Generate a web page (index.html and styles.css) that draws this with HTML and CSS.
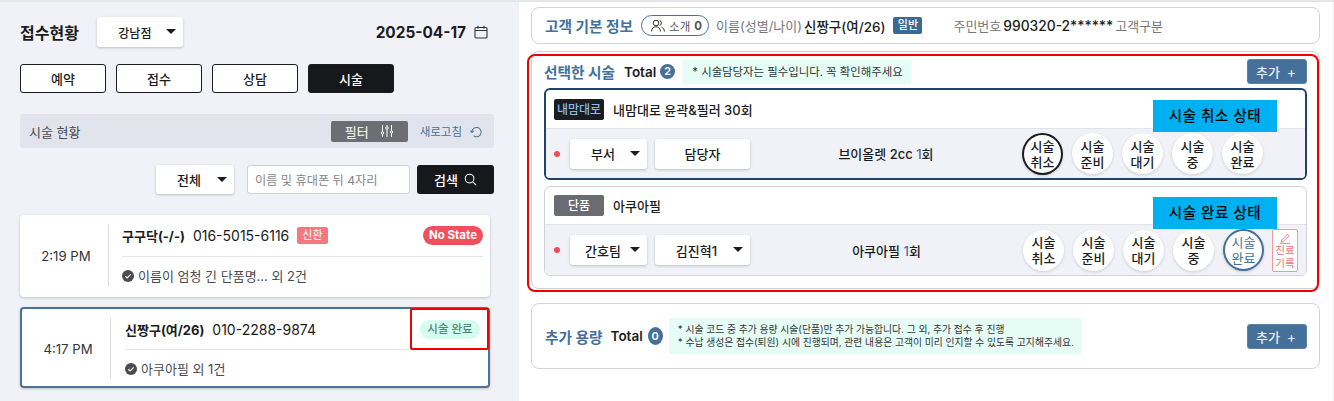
FILE: index.html
```html
<!DOCTYPE html>
<html lang="ko">
<head>
    <meta charset="UTF-8">
    <title>접수현황</title>
    <link rel="stylesheet" href="styles.css">
</head>
<body>
<div class="topline"></div>
<div class="page">

    <!-- 왼쪽 접수 현황 -->
    <div class="left">
        <div class="head-row">
            <h1>접수현황</h1>
            <div class="select branch">강남점<span class="caret"></span></div>
            <div class="date">2025-04-17
                <svg class="cal" viewBox="0 0 14 14" width="14" height="14" fill="none" stroke="#333" stroke-width="1.1"><rect x="1" y="2.5" width="12" height="10.5" rx="1"/><path d="M1 5.5h12M4 .8v3M10 .8v3"/></svg>
            </div>
        </div>

        <div class="tabs">
            <button class="tab">예약</button>
            <button class="tab">접수</button>
            <button class="tab">상담</button>
            <button class="tab on">시술</button>
        </div>

        <div class="status-bar">
            <span class="status-title">시술 현황</span>
            <span class="filter">필터
                <svg viewBox="0 0 14 14" width="14" height="14" fill="none" stroke="#fff" stroke-width="1"><path d="M2.5 1v12M7 1v12M11.500 1v12"/><circle cx="2.500" cy="9" r="1.200" fill="#6d6e73"/><circle cx="7" cy="4" r="1.200" fill="#6d6e73"/><circle cx="11.500" cy="8" r="1.200" fill="#6d6e73"/></svg>
            </span>
            <span class="refresh">새로고침
                <svg viewBox="0 0 14 14" width="13" height="13" fill="none" stroke="#4a7398" stroke-width="1.100"><path d="M3.800 11.500A5 5 0 1 0 2 7.500"/><path d="M.4 6l1.700 2L4 6.200"/></svg>
            </span>
        </div>

        <div class="search-row">
            <div class="select all">전체<span class="caret"></span></div>
            <div class="search-input">이름 및 휴대폰 뒤 4자리</div>
            <button class="search-btn">검색
                <svg viewBox="0 0 14 14" width="13" height="13" fill="none" stroke="#fff" stroke-width="1.100"><circle cx="6" cy="6" r="4.700"/><path d="M9.500 9.500L13 13"/></svg>
            </button>
        </div>

        <div class="card">
            <div class="time">2:19 PM</div>
            <div class="info">
                <div class="info-top">
                    <b>구구닥(-/-)</b><span class="phone">016-5015-6116</span><span class="tag-new">신환</span>
                    <span class="state state-none">No State</span>
                </div>
                <div class="info-sub">
                    <svg viewBox="0 0 12 12" width="12" height="12"><circle cx="6" cy="6" r="6" fill="#4a4b50"/><path d="M3.300 6.200l1.900 1.800 3.500-3.600" fill="none" stroke="#fff" stroke-width="1.200"/></svg>
                    이름이 엄청 긴 단품명... 외 2건
                </div>
            </div>
        </div>

        <div class="card card-on">
            <div class="time">4:17 PM</div>
            <div class="info">
                <div class="info-top">
                    <b>신짱구(여/26)</b><span class="phone">010-2288-9874</span>
                    <span class="state state-done">시술 완료</span>
                </div>
                <div class="info-sub">
                    <svg viewBox="0 0 12 12" width="12" height="12"><circle cx="6" cy="6" r="6" fill="#4a4b50"/><path d="M3.300 6.200l1.900 1.800 3.500-3.600" fill="none" stroke="#fff" stroke-width="1.200"/></svg>
                    아쿠아필 외 1건
                </div>
            </div>
            <div class="mark-state"></div>
        </div>
    </div>

    <!-- 오른쪽 고객 정보 -->
    <div class="right">
        <div class="box customer">
            <span class="box-title">고객 기본 정보</span>
            <span class="pill">
                <svg viewBox="0 0 14 14" width="14" height="14" fill="none" stroke="#333" stroke-width="1"><circle cx="5" cy="4" r="2.800"/><path d="M.6 12.500c0-3 2-4.800 4.400-4.800s4.400 1.800 4.400 4.800"/><path d="M8.500 1.400a2.800 2.800 0 0 1 0 5.300M10.500 8.200c1.800.6 2.900 2.200 2.900 4.300"/></svg>
                소개 <b>0</b>
            </span>
            <span class="label name-label">이름(성별/나이)</span>
            <span class="value">신짱구(여/26)</span>
            <span class="tag-normal">일반</span>
            <span class="label id-label">주민번호</span>
            <span class="value">990320-2******</span>
            <span class="label">고객구분</span>
        </div>

        <div class="box selected">
            <div class="sec-head">
                <span class="box-title">선택한 시술</span>
                <span class="total">Total</span>
                <span class="count">2</span>
                <span class="note note-one">* 시술담당자는 필수입니다. 꼭 확인해주세요</span>
                <button class="add">추가<span>+</span></button>
            </div>

            <div class="item item-on">
                <div class="item-head">
                    <span class="kind kind-my">내맘대로</span>
                    <span class="item-name">내맘대로 윤곽&amp;필러 30회</span>
                </div>
                <div class="item-body">
                    <span class="dot"></span>
                    <div class="select dept">부서<span class="caret"></span></div>
                    <div class="select staff">담당자</div>
                    <div class="treat">브이올렛 2cc <em>1</em>회</div>
                    <div class="steps">
                        <span class="step step-cancel">시술<br>취소</span>
                        <span class="step">시술<br>준비</span>
                        <span class="step">시술<br>대기</span>
                        <span class="step">시술<br>중</span>
                        <span class="step">시술<br>완료</span>
                    </div>
                </div>
                <div class="callout callout-one">시술 취소 상태</div>
            </div>

            <div class="item">
                <div class="item-head">
                    <span class="kind kind-single">단품</span>
                    <span class="item-name">아쿠아필</span>
                </div>
                <div class="item-body">
                    <span class="dot"></span>
                    <div class="select dept">간호팀<span class="caret"></span></div>
                    <div class="select staff">김진혁1<span class="caret"></span></div>
                    <div class="treat">아쿠아필 <em>1</em>회</div>
                    <div class="steps">
                        <span class="step">시술<br>취소</span>
                        <span class="step">시술<br>준비</span>
                        <span class="step">시술<br>대기</span>
                        <span class="step">시술<br>중</span>
                        <span class="step step-done">시술<br>완료</span>
                        <span class="record">
                            <svg viewBox="0 0 14 14" width="14" height="12" fill="none" stroke="#f0707a" stroke-width="1"><path d="M3 9.500L10 2.500l1.800 1.800-7 7-2.300.5zM1 13.300h12"/></svg>
                            진료<br>기록
                        </span>
                    </div>
                </div>
                <div class="callout callout-two">시술 완료 상태</div>
            </div>

            <div class="mark-selected"></div>
        </div>

        <div class="box extra">
            <span class="box-title">추가 용량</span>
            <span class="total">Total</span>
            <span class="count count-oval">0</span>
            <div class="note note-two">* 시술 코드 중 추가 용량 시술(단품)만 추가 가능합니다. 그 외, 추가 접수 후 진행<br>* 수납 생성은 접수(퇴원) 시에 진행되며, 관련 내용은 고객이 미리 인지할 수 있도록 고지해주세요.</div>
            <button class="add">추가<span>+</span></button>
        </div>
    </div>
</div>
</body>
</html>
```

FILE: styles.css
```css
* {
    box-sizing: border-box;
}

body {
    margin: 0;
    width: 1334px;
    height: 401px;
    overflow: hidden;
    font-family: Inter, "Noto Sans CJK KR", sans-serif;
    color: #1b1c20;
    background-color: #fff;
}

button {
    font-family: inherit;
    cursor: pointer;
}

.topline {
    height: 2px;
    background-color: #e6e6e8;
}

.page {
    display: flex;
    height: 399px;
}

/* left */
.left {
    width: 519px;
    padding: 15px 25px 0 20px;
    background-color: #f0f2f8;
}

.head-row {
    display: flex;
    align-items: center;
    height: 30px;
}

h1 {
    margin: 0 18px 0 0;
    font-size: 16px;
    font-weight: 700;
}

.select {
    position: relative;
    display: flex;
    align-items: center;
    justify-content: center;
    height: 30px;
    background-color: #fff;
    border-radius: 3px;
    box-shadow: 0 1px 3px rgba(0, 0, 0, 0.22);
    font-size: 13px;
    font-weight: 500;
}

.caret {
    position: absolute;
    top: 12px;
    right: 7px;
    border-left: 5px solid transparent;
    border-right: 5px solid transparent;
    border-top: 5px solid #1b1c20;
}

.branch {
    width: 86px;
    padding-right: 10px;
    font-size: 12px;
}

.date {
    display: flex;
    align-items: center;
    gap: 8px;
    margin-left: auto;
    margin-right: 6px;
    font-size: 15.400px;
    font-weight: 700;
}

.tabs {
    display: flex;
    gap: 10px;
    margin-top: 17px;
}

.tab {
    width: 86px;
    height: 29px;
    padding: 0;
    background-color: #fff;
    border: 1px solid #1b1c20;
    border-radius: 3px;
    font-size: 13px;
    font-weight: 500;
    color: #1b1c20;
}

.tab.on {
    background-color: #17181c;
    color: #fff;
}

.status-bar {
    display: flex;
    align-items: center;
    height: 34px;
    margin-top: 21px;
    padding: 0 11px 0 9px;
    background-color: #e1e4ec;
    border-radius: 3px;
}

.status-title {
    font-size: 13px;
    color: #4a4b50;
}

.filter {
    display: flex;
    align-items: center;
    justify-content: center;
    gap: 11px;
    width: 77px;
    height: 21px;
    margin-left: auto;
    background-color: #6d6e73;
    border-radius: 2px;
    font-size: 13px;
    color: #fff;
}

.refresh {
    display: flex;
    align-items: center;
    gap: 8px;
    margin-left: 12px;
    font-size: 11.500px;
    color: #44709a;
}

.search-row {
    display: flex;
    justify-content: flex-end;
    margin-top: 17px;
}

.all {
    width: 78px;
    padding-right: 12px;
    height: 29px;
}

.search-input {
    display: flex;
    align-items: center;
    width: 163px;
    height: 29px;
    margin-left: 13px;
    padding-left: 7px;
    background-color: #fff;
    border: 1px solid #cfd1d6;
    border-radius: 3px;
    font-size: 12.200px;
    color: #85868b;
}

.search-btn {
    display: flex;
    align-items: center;
    justify-content: center;
    gap: 6px;
    width: 77px;
    height: 29px;
    margin-left: 7px;
    padding: 0;
    background-color: #17181c;
    border: 0;
    border-radius: 3px;
    font-size: 13px;
    font-weight: 500;
    color: #fff;
}

.card {
    position: relative;
    display: flex;
    width: 470px;
    height: 82px;
    margin-top: 21px;
    padding: 10px 7px 0 0;
    background-color: #fff;
    border-radius: 4px;
    box-shadow: 0 1px 3px rgba(0, 0, 0, 0.2);
}

.card-on {
    height: 81px;
    margin-top: 10px;
    padding: 9px 8px 0 0;
    border: 2px solid #4a7398;
}

.time {
    display: flex;
    align-items: center;
    justify-content: center;
    width: 89px;
    height: 61px;
    padding-left: 4px;
    border-right: 1px solid #dcdde0;
    font-size: 13.200px;
    color: #333438;
}

.info {
    flex: 1;
    margin-left: 13px;
}

.info-top {
    display: flex;
    align-items: center;
    height: 32px;
    padding-bottom: 11px;
    border-bottom: 1px solid #e3e4e7;
    font-size: 13px;
}

.card-on .info-top {
    padding-bottom: 9px;
}

.card-on .info {
    margin-left: 14px;
}

.phone {
    margin-left: 8px;
    font-size: 14px;
}

.tag-new {
    margin-left: 8px;
    padding: 0 5px;
    height: 17px;
    line-height: 17px;
    background-color: #f5777f;
    border-radius: 2px;
    font-size: 11px;
    color: #fff;
}

.state {
    margin-left: auto;
    width: 60px;
    height: 19px;
    line-height: 19px;
    border-radius: 10px;
    text-align: center;
    font-size: 11.500px;
    font-weight: 700;
}

.state-none {
    background-color: #f04f5b;
    color: #fff;
}

.state-done {
    background-color: #d6fbef;
    font-weight: 500;
    color: #4d8a75;
}

.info-sub {
    display: flex;
    align-items: center;
    gap: 4px;
    margin-top: 9px;
    font-size: 13px;
    color: #4a4b50;
}

.mark-state {
    position: absolute;
    top: -1px;
    right: -1px;
    width: 79px;
    height: 42px;
    border: 2px solid #f00000;
    border-radius: 2px;
}

/* right */
.right {
    flex: 1;
    padding: 5px 13px 0 12px;
    border-right: 1px solid #eeeeee;
}

.box {
    background-color: #fff;
    border: 1px solid #d2d3d6;
    border-radius: 8px;
}

.box-title {
    font-size: 14.700px;
    font-weight: 700;
    color: #44709a;
}

.customer {
    display: flex;
    align-items: center;
    height: 37px;
    padding-left: 13px;
}

.pill {
    display: flex;
    align-items: center;
    gap: 4px;
    width: 68px;
    height: 21px;
    margin-left: 8px;
    padding-left: 9px;
    border: 1px solid #44709a;
    border-radius: 11px;
    font-size: 11.500px;
    color: #55565b;
}

.label {
    font-size: 13px;
    color: #76777c;
    white-space: nowrap;
}

.name-label {
    margin-left: 7px;
}

.value {
    margin: 0 2px;
    font-size: 13.500px;
    font-weight: 500;
    white-space: nowrap;
}

.tag-normal {
    margin-left: 6px;
    width: 29px;
    height: 17px;
    line-height: 17px;
    background-color: #3a6a94;
    border-radius: 2px;
    text-align: center;
    font-size: 11px;
    font-weight: 500;
    color: #fff;
}

.id-label {
    margin-left: 31px;
}

.id-label + .value {
    font-size: 13.800px;
}

.selected {
    position: relative;
    height: 238px;
    margin-top: 7px;
    padding: 7px 12px 0 12px;
}

.sec-head {
    display: flex;
    align-items: center;
    height: 25px;
}

.total {
    margin-left: 9px;
    font-size: 13.500px;
    font-weight: 600;
}

.count {
    width: 15px;
    height: 15px;
    margin-left: 4px;
    line-height: 15px;
    background-color: #44709a;
    border-radius: 50%;
    text-align: center;
    font-size: 11px;
    font-weight: 600;
    color: #fff;
}

.count-oval {
    height: 18px;
    line-height: 18px;
    margin-left: 5px;
}

.note {
    background-color: #e6fdf5;
    color: #333438;
}

.note-one {
    width: 228px;
    height: 24px;
    line-height: 24px;
    margin-left: 8px;
    padding-left: 9px;
    font-size: 11.400px;
}

.add {
    display: flex;
    align-items: center;
    justify-content: space-between;
    width: 60px;
    height: 25px;
    margin-left: auto;
    padding: 0 10px 0 8px;
    background-color: #44709a;
    border: 1px solid #5b82a6;
    border-radius: 3px;
    font-size: 13px;
    font-weight: 500;
    color: #e8eef4;
}

.add span {
    font-size: 14px;
    font-weight: 400;
}

.item {
    position: relative;
    margin-top: 6px;
    height: 90px;
    border: 1px solid #d2d3d6;
    border-radius: 6px;
    overflow: hidden;
}

.item-on {
    height: 92px;
    margin-top: 4px;
    border: 2px solid #1f4468;
}

.item-head {
    display: flex;
    align-items: center;
    height: 38px;
    padding-left: 9px;
    border-bottom: 1px solid #e1e3e8;
}

.item-on .item-head {
    height: 39px;
    padding-left: 8px;
}

.kind {
    width: 50px;
    height: 21px;
    line-height: 21px;
    border-radius: 2px;
    text-align: center;
    font-size: 12px;
    font-weight: 500;
}

.kind-my {
    background-color: #1a1c20;
    color: #86bdf0;
}

.kind-single {
    background-color: #6b6c72;
    color: #fff;
}

.item-name {
    margin-left: 9px;
    font-size: 13px;
    font-weight: 500;
}

.item-body {
    display: flex;
    align-items: center;
    height: 50px;
    padding-left: 9px;
    background-color: #f0f2f8;
}

.item-on .item-body {
    height: 49px;
    padding-left: 8px;
}

.dot {
    width: 6px;
    height: 6px;
    background-color: #f04b5a;
    border-radius: 50%;
}

.dept {
    width: 77px;
    margin-left: 10px;
    padding-right: 11px;
}

.staff {
    width: 95px;
    margin-left: 8px;
}

.staff:has(.caret) {
    padding-right: 12px;
}

.treat {
    flex: 1;
    text-align: center;
    font-size: 13px;
    font-weight: 500;
}

.treat em {
    font-style: normal;
    color: #44709a;
}

.steps {
    display: flex;
    align-items: center;
    gap: 9px;
    width: 283px;
    flex-shrink: 0;
}

.step {
    display: flex;
    align-items: center;
    justify-content: center;
    width: 41px;
    height: 41px;
    flex-shrink: 0;
    background-color: #fff;
    border-radius: 50%;
    box-shadow: 0 1px 3px rgba(0, 0, 0, 0.16);
    text-align: center;
    font-size: 13px;
    line-height: 16px;
    font-weight: 500;
}

.step-cancel {
    height: 42px;
    border: 2px solid #1b1c20;
}

.step-done {
    height: 42px;
    border: 2px solid #44709a;
    font-weight: 400;
    color: #44709a;
}

.record {
    display: flex;
    flex-direction: column;
    align-items: center;
    flex-shrink: 0;
    width: 26px;
    height: 43px;
    margin-left: -1px;
    padding-top: 2px;
    background-color: #fff;
    border: 1px solid #f5989e;
    border-radius: 2px;
    font-size: 10.500px;
    line-height: 13px;
    text-align: center;
    color: #f0707a;
}

.callout {
    position: absolute;
    left: 607px;
    width: 124px;
    height: 32px;
    line-height: 32px;
    background-color: #00b0f0;
    text-align: center;
    font-size: 14.500px;
    font-weight: 500;
    letter-spacing: 0.6px;
    color: #000;
}

.callout-one {
    top: 10px;
}

.callout-two {
    top: 10px;
    left: 608px;
}

.mark-selected {
    position: absolute;
    top: 2px;
    left: -5px;
    width: 792px;
    height: 238px;
    border: 2px solid #f00000;
    border-radius: 8px;
}

.extra {
    display: flex;
    align-items: center;
    height: 66px;
    margin-top: 14px;
    padding: 0 12px 0 13px;
}

.extra .total {
    margin-left: 8px;
}

.note-two {
    width: 413px;
    height: 36px;
    margin-left: 6px;
    padding: 5px 0 0 9px;
    font-size: 9.800px;
    line-height: 13px;
    white-space: nowrap;
}
```
